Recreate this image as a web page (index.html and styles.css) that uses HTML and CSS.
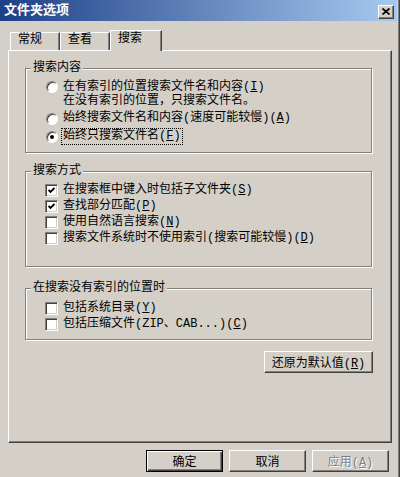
FILE: index.html
```html
<!DOCTYPE html>
<html>
<head>
  <meta charset="utf-8" />
  <title>文件夹选项</title>
  <link rel="stylesheet" href="styles.css">
</head>
<body>

<div class="window">

  <div class="titlebar">
    <span class="title">文件夹选项</span>
    <span class="close">
      <svg width="8" height="7" viewBox="0 0 8 7"><path d="M0.5 0.5 L7.5 6.5 M7.5 0.5 L0.5 6.5" stroke="#000" stroke-width="1.7" fill="none"/></svg>
    </span>
  </div>

  <div class="tabs">
    <div class="tab">常规</div>
    <div class="tab">查看</div>
    <div class="tab active">搜索</div>
  </div>

  <div class="panel">

    <fieldset class="group g1">
      <legend>搜索内容</legend>
      <div class="opt two">
        <span class="radio"></span>
        <span class="text">在有索引的位置搜索文件名和内容(<u>I</u>)<br>在没有索引的位置，只搜索文件名。</span>
      </div>
      <div class="opt">
        <span class="radio"></span>
        <span class="text">始终搜索文件名和内容(速度可能较慢)(<u>A</u>)</span>
      </div>
      <div class="opt">
        <span class="radio on"></span>
        <span class="text focus">始终只搜索文件名(<u>F</u>)</span>
      </div>
    </fieldset>

    <fieldset class="group g2">
      <legend>搜索方式</legend>
      <div class="opt">
        <span class="check on"><svg width="7" height="7" viewBox="0 0 7 7"><polyline points="0.5,3 2.5,5 6.5,1" stroke="#000" stroke-width="1.8" fill="none"/></svg></span>
        <span class="text">在搜索框中键入时包括子文件夹(<u>S</u>)</span>
      </div>
      <div class="opt">
        <span class="check on"><svg width="7" height="7" viewBox="0 0 7 7"><polyline points="0.5,3 2.5,5 6.5,1" stroke="#000" stroke-width="1.8" fill="none"/></svg></span>
        <span class="text">查找部分匹配(<u>P</u>)</span>
      </div>
      <div class="opt">
        <span class="check"></span>
        <span class="text">使用自然语言搜索(<u>N</u>)</span>
      </div>
      <div class="opt">
        <span class="check"></span>
        <span class="text">搜索文件系统时不使用索引(搜索可能较慢)(<u>D</u>)</span>
      </div>
    </fieldset>

    <fieldset class="group g3">
      <legend>在搜索没有索引的位置时</legend>
      <div class="opt">
        <span class="check"></span>
        <span class="text">包括系统目录(<u>Y</u>)</span>
      </div>
      <div class="opt">
        <span class="check"></span>
        <span class="text">包括压缩文件(ZIP、CAB...)(<u>C</u>)</span>
      </div>
    </fieldset>

    <div class="restore">
      <button class="btn wide">还原为默认值(<u>R</u>)</button>
    </div>

  </div>

  <div class="buttons">
    <button class="btn default">确定</button>
    <button class="btn">取消</button>
    <button class="btn disabled">应用(<u>A</u>)</button>
  </div>

</div>

</body>
</html>
```

FILE: styles.css
```css
body {
    margin: 0;
    font-family: "Liberation Mono", "Noto Sans CJK SC", sans-serif;
    font-size: 12px;
    color: #000;
}
.window {
    width: 400px;
    height: 477px;
    box-sizing: border-box;
    background: #d4d0c8;
    display: flex;
    flex-direction: column;
    box-shadow: inset -1px 0 #404040, inset -2px 0 #808080;
}
.titlebar {
    height: 21px;
    margin-right: 3px;
    padding: 0 3px 0 4px;
    display: flex;
    align-items: center;
    justify-content: space-between;
    background: linear-gradient(to right, #1f3f86, #a6caf0);
}
.title {
    color: #fff;
    font-weight: bold;
    font-size: 13px;
    line-height: 21px;
}
.close {
    width: 16px;
    height: 14px;
    margin-top: 2px;
    box-sizing: border-box;
    display: flex;
    align-items: center;
    justify-content: center;
    background: #d4d0c8;
    border: 1px solid;
    border-color: #fff #404040 #404040 #fff;
    box-shadow: inset -1px -1px #808080;
}

/* tabs */
.tabs {
    height: 20px;
    margin-top: 9px;
    padding-left: 10px;
    display: flex;
    align-items: flex-end;
    position: relative;
    z-index: 1;
}
.tab {
    width: 50px;
    height: 18px;
    box-sizing: border-box;
    padding-left: 7px;
    line-height: 15px;
    border-top: 1px solid #fff;
    border-left: 1px solid #fff;
    border-right: 1px solid #404040;
    box-shadow: inset -1px 0 #808080;
    background: #d4d0c8;
}
.tab.active {
    width: 52px;
    height: 21px;
    margin-bottom: -1px;
    line-height: 16px;
}

.panel {
    height: 393px;
    margin: 0 8px;
    box-sizing: border-box;
    border: 1px solid;
    border-color: #fff #404040 #404040 #fff;
    box-shadow: inset -1px -1px #808080;
    display: flex;
    flex-direction: column;
}

/* group boxes */
.group {
    margin: 10px 19px 0 16px;
    padding: 5px 0 9px 5px;
    min-width: 0;
    border: 1px solid #808080;
    box-shadow: 1px 1px 0 #fff, inset 1px 1px 0 #fff;
}
.group legend {
    padding: 0 2px;
    line-height: 14px;
    background: #d4d0c8;
}
.g2 {
    margin-top: 11px;
    padding-top: 6px;
    padding-bottom: 21px;
}
.g3 {
    margin-top: 14px;
    padding-top: 7px;
    padding-bottom: 8px;
}
.opt {
    display: flex;
    align-items: flex-start;
    margin-left: 14px;
    line-height: 13px;
    white-space: nowrap;
}
.opt.two {
    line-height: 14px;
}
.g1 .opt + .opt {
    margin-top: 4px;
}
.g1 .opt + .opt + .opt {
    margin-top: 5px;
}
.g2 .opt + .opt, .g3 .opt + .opt {
    margin-top: 3px;
}
.text.focus {
    outline: 1px dotted #000;
    outline-offset: 1px;
}
.radio {
    width: 12px;
    height: 12px;
    margin: 1px 5px 0 1px;
    flex: none;
    box-sizing: border-box;
    border-radius: 50%;
    background: #fff;
    border: 1px solid;
    border-color: #808080 #fff #fff #808080;
    box-shadow: inset 1px 1px #404040;
    display: flex;
    align-items: center;
    justify-content: center;
}
.opt.two .radio {
    margin-top: 1px;
}
.radio.on::after {
    content: "";
    width: 4px;
    height: 4px;
    border-radius: 50%;
    background: #000;
}
.check {
    width: 13px;
    height: 13px;
    margin-right: 5px;
    flex: none;
    box-sizing: border-box;
    background: #fff;
    border: 1px solid;
    border-color: #808080 #fff #fff #808080;
    box-shadow: inset 1px 1px #404040, inset -1px -1px #d4d0c8;
    display: flex;
    align-items: center;
    justify-content: center;
}

/* buttons */
.btn {
    height: 22px;
    width: 77px;
    padding: 0;
    font: inherit;
    color: #000;
    background: #d4d0c8;
    border: 1px solid;
    border-color: #fff #404040 #404040 #fff;
    box-shadow: inset -1px -1px #808080;
}
.btn.wide {
    width: 109px;
}
.btn.default {
    border-color: #000;
    box-shadow: inset 1px 1px #fff, inset -1px -1px #404040, inset -2px -2px #808080;
}
.btn.disabled {
    color: #808080;
    text-shadow: 1px 1px #fff;
}
.restore {
    margin: 11px 18px 0 0;
    display: flex;
    justify-content: flex-end;
}
.buttons {
    margin-top: 7px;
    padding-right: 11px;
    display: flex;
    justify-content: flex-end;
    gap: 6px;
}
```
